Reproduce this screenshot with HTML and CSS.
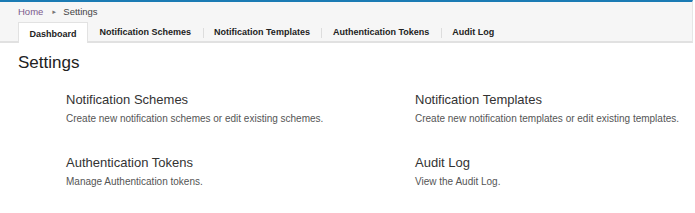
FILE: index.html
```html
<!DOCTYPE html>
<html>
<head>
<meta charset="utf-8">
<link rel="stylesheet" href="styles.css">
</head>
<body>
<div class="header">
  <div class="crumbs">
    <a class="crumb-link" href="#">Home</a>
    <span class="crumb-sep">&#9658;</span>
    <span class="crumb-current">Settings</span>
  </div>
  <div class="tabs">
    <div class="tab active">Dashboard</div>
    <div class="tab">Notification Schemes</div>
    <div class="tab sep">Notification Templates</div>
    <div class="tab sep">Authentication Tokens</div>
    <div class="tab sep">Audit Log</div>
  </div>
</div>
<div class="main">
  <h1 class="title">Settings</h1>
  <div class="grid">
    <div class="item">
      <div class="item-title">Notification Schemes</div>
      <div class="item-desc">Create new notification schemes or edit existing schemes.</div>
    </div>
    <div class="item">
      <div class="item-title">Notification Templates</div>
      <div class="item-desc">Create new notification templates or edit existing templates.</div>
    </div>
    <div class="item">
      <div class="item-title">Authentication Tokens</div>
      <div class="item-desc">Manage Authentication tokens.</div>
    </div>
    <div class="item">
      <div class="item-title">Audit Log</div>
      <div class="item-desc">View the Audit Log.</div>
    </div>
  </div>
</div>
</body>
</html>
```
FILE: styles.css
```css
html, body {
  margin: 0;
  padding: 0;
  background: #ffffff;
  font-family: "Liberation Sans", Arial, sans-serif;
  color: #333333;
}
.header {
  background: #f6f6f6;
  border-top: 2px solid #1b7bb4;
  border-bottom: 2px solid #e1e1e1;
  border-right: 1px solid #e6e6e6;
  margin-right: 2px;
  padding-left: 18px;
}
.crumbs {
  height: 19px;
  display: flex;
  align-items: center;
  font-size: 9.5px;
}
.crumb-link {
  color: #7a5a8c;
  text-decoration: none;
}
.crumb-sep {
  font-size: 6px;
  color: #777777;
  margin: 0 6px 0 8px;
}
.crumb-current {
  color: #444444;
}
.tabs {
  display: flex;
  height: 20px;
  align-items: stretch;
}
.tab {
  font-size: 9px;
  font-weight: bold;
  color: #222222;
  padding: 2px 11.5px 0 11.5px;
  display: flex;
  align-items: center;
  position: relative;
}
.tab.active {
  background: #ffffff;
  border: 1px solid #e2e2e2;
  border-bottom: none;
  margin-top: 1px;
  margin-bottom: -2px;
  padding: 1px 10.5px 0 10.5px;
}
.tab.sep::before {
  content: "";
  position: absolute;
  left: 0;
  top: 7px;
  width: 1px;
  height: 10px;
  background: #dddddd;
}
.main {
  padding: 0 0 0 18px;
}
.title {
  margin: 10px 0 0 0;
  font-size: 17px;
  font-weight: normal;
  line-height: 20px;
  color: #222222;
}
.grid {
  display: grid;
  grid-template-columns: 349px 1fr;
  margin-left: 48px;
  margin-top: 19px;
  row-gap: 30px;
}
.item-title {
  font-size: 13px;
  line-height: 16px;
  color: #333333;
}
.item-desc {
  font-size: 10px;
  line-height: 13px;
  margin-top: 4px;
  color: #555555;
  white-space: nowrap;
}
```
